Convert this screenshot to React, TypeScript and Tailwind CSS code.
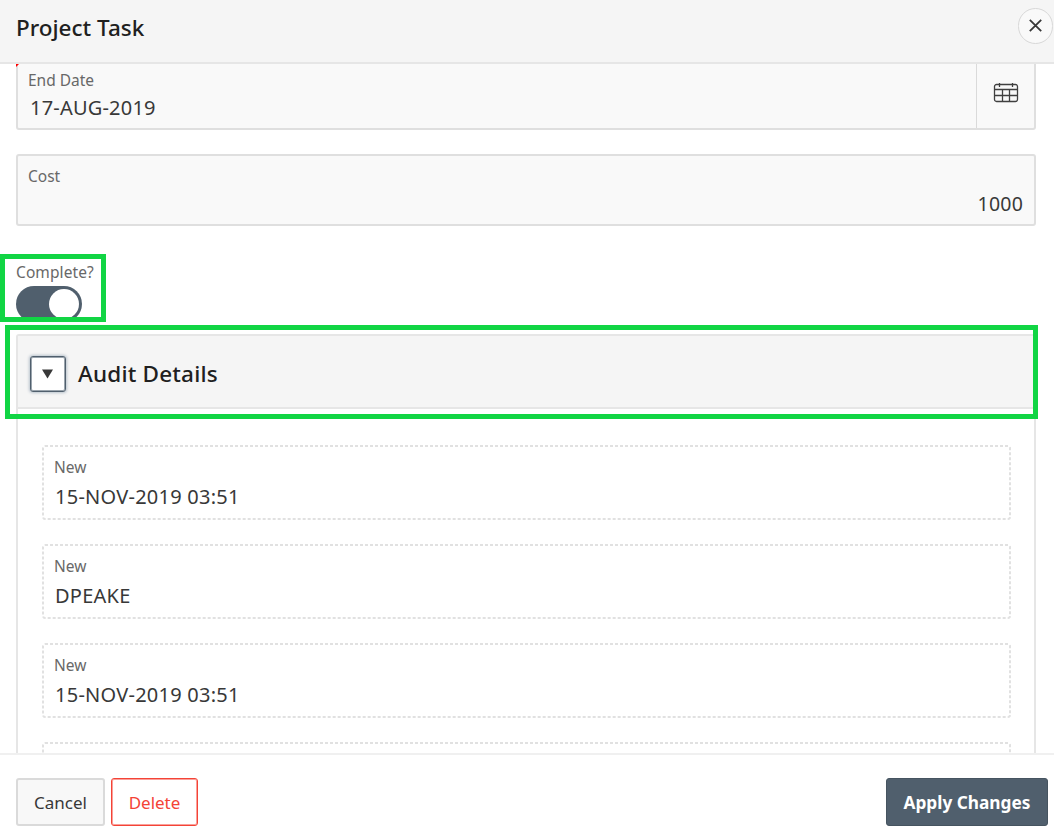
import React from 'react';

function DashedFrame() {
  return (
    <svg className="pointer-events-none absolute inset-0" width="969" height="75" fill="none" stroke="#e1e1e1" strokeWidth="2" strokeDasharray="3 2">
      <rect x="1" y="1" width="967" height="73" rx="2" />
    </svg>
  );
}

function AuditItem({ value }: { value?: string }) {
  return (
    <div className="relative h-[75px] shrink-0 pt-[11px] pl-3">
      <DashedFrame />
      {value && (
        <>
          <div className="text-[15.5px] leading-[22px] text-[#686868]">New</div>
          <div className="mt-[6px] pl-px text-[20px] leading-[26px] tracking-[0.25px] text-[#383838]">{value}</div>
        </>
      )}
    </div>
  );
}

export default function App() {
  return (
    <div className="relative flex h-[829px] w-[1054px] flex-col overflow-hidden bg-white font-['Noto_Sans',sans-serif] text-[#383838]">
      <header className="flex h-16 shrink-0 justify-between border-b-2 border-[#e6e6e6] bg-[#f5f5f5] pl-4">
        <h1 className="pt-3 text-[22.5px] leading-8 font-medium text-[#202020]">Project Task</h1>
        <button aria-label="Close" className="mt-2 mr-px flex h-9 w-[35px] items-center justify-center rounded-full border border-[#d8d8d8] bg-[#f9f9f9]">
          <svg width="14" height="14" viewBox="0 0 14 14" fill="none" stroke="#383838" strokeWidth="1.8">
            <path d="M.8.8 12.2 12.2M12.2.8.8 12.2" />
          </svg>
        </button>
      </header>

      <main className="flex h-[689px] shrink-0 flex-col overflow-hidden pr-[18px] pl-4">
        <div className="relative -mt-1.5 flex h-[72px] shrink-0 rounded-[3px] border-2 border-[#dfdfdf] bg-[#f9f9f9]">
          <svg className="absolute top-1 -left-0.5" width="3" height="3"><path d="M0 0H3L0 3Z" fill="#f00" /></svg>
          <div className="flex-1 pt-[9px] pl-2.5">
            <div className="text-[15.5px] leading-[22px] text-[#686868]">End Date</div>
            <div className="mt-1 pl-0.5 text-[20px] leading-[26px] tracking-[0.2px]">17-AUG-2019</div>
          </div>
          <div className="w-[58px] border-l border-[#dadada] pt-[22px] pl-4">
            <svg width="26" height="22" viewBox="0 0 26 22" fill="none" stroke="#404040" strokeWidth="1.3">
              <rect x="1.5" y="2.5" width="23" height="17" rx="2" />
              <path d="M1.5 7.5H24.5M1.5 13.5H24.5M9.5 8V20M16.5 8V20M6.5 1V5M19.5 1V5" />
            </svg>
          </div>
        </div>

        <div className="mt-6 h-[72px] shrink-0 rounded-[3px] border-2 border-[#dfdfdf] bg-[#f9f9f9] pt-[9px] pr-[11px] pl-2.5">
          <div className="text-[15.5px] leading-[22px] text-[#686868]">Cost</div>
          <div className="mt-1 text-right text-[19.5px] leading-[26px] tracking-[0.2px]">1000</div>
        </div>

        <div className="-ml-4 mt-7 h-[68px] w-[106px] shrink-0 overflow-hidden border-[5px] border-[#11d544] pt-[2px] pl-[11px]">
          <div className="text-[15.5px] leading-[22px] tracking-[0.1px] whitespace-nowrap text-[#686868]">Complete?</div>
          <div className="mt-[3px] flex h-9 w-[66px] justify-end rounded-full bg-[#505f6d] p-[3px]">
            <div className="h-[30px] w-[30px] rounded-full bg-white" />
          </div>
        </div>

        <section className="mt-3 flex h-[600px] shrink-0 flex-col rounded-[3px] border-2 border-[#e6e6e6]">
          <div className="flex h-[73px] shrink-0 items-center border-b-2 border-[#e6e6e6] bg-[#f5f5f5] pt-1 pl-3">
            <button aria-label="Collapse" className="flex h-9 w-9 items-center justify-center rounded-[3px] border border-[#505f6d] bg-white shadow-[0_0_3px_1px_#b9c3cc,inset_0_0_0_1px_#9aa4ad]">
              <svg width="12" height="10" viewBox="0 0 12 10"><path d="M0 .5H11L5.5 9.5Z" fill="#383838" /></svg>
            </button>
            <h2 className="pl-3 text-[22.5px] leading-8 font-medium tracking-[0.2px] text-[#202020]">Audit Details</h2>
          </div>
          <div className="flex flex-col gap-6 pt-9 pr-[23px] pl-6">
            <AuditItem value="15-NOV-2019 03:51" />
            <AuditItem value="DPEAKE" />
            <AuditItem value="15-NOV-2019 03:51" />
            <AuditItem />
          </div>
        </section>
      </main>

      <footer className="flex h-[76px] shrink-0 justify-between border-t-2 border-[#f0f0f0] pt-[23px] pr-1.5 pl-4">
        <div className="flex gap-1.5">
          <button className="h-12 w-[89px] rounded-[3px] border-2 border-[#dadada] bg-[#f8f8f8] pt-px text-[17px]">Cancel</button>
          <button className="h-12 w-[87px] rounded-[3px] border border-[#f44336] bg-white pt-px text-[17px] text-[#f44336] shadow-[inset_0_0_0_1px_#f9a09a]">Delete</button>
        </div>
        <button className="h-12 w-[162px] rounded-[3px] border border-[#465460] bg-[#505f6d] pt-0.5 text-[17.25px] font-bold whitespace-nowrap text-white">Apply Changes</button>
      </footer>

      <div className="pointer-events-none absolute top-[325px] left-[5px] h-[94px] w-[1033px] border-[5px] border-[#11d544]" />
    </div>
  );
}
